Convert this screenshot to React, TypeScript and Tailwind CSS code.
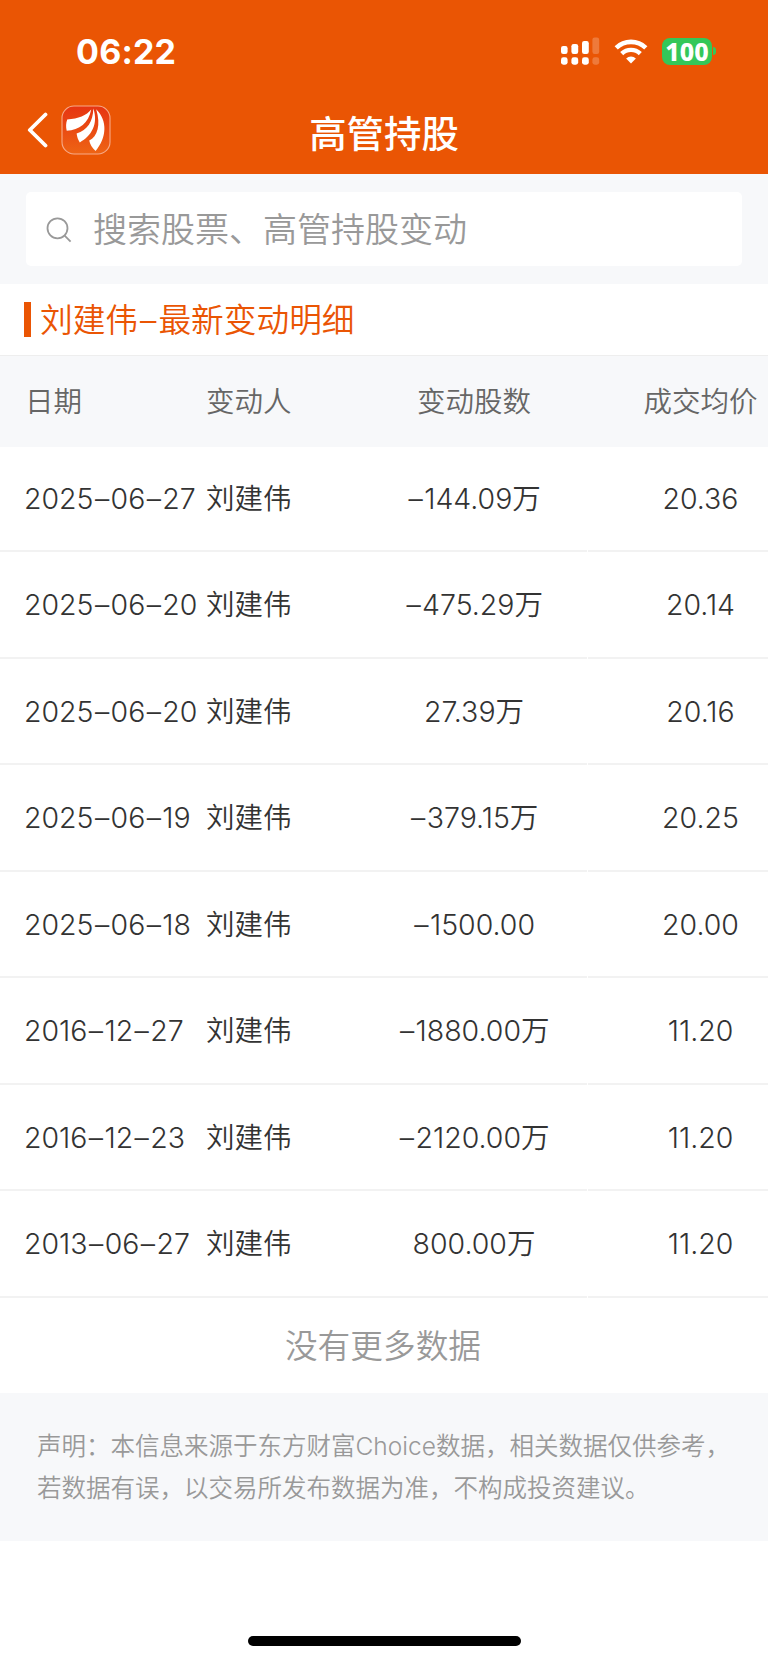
import { Fragment } from "react";

type Change = { date: string; name: string; shares: string; price: string };

const changes: Change[] = [
  { date: "2025–06–27", name: "刘建伟", shares: "–144.09万", price: "20.36" },
  { date: "2025–06–20", name: "刘建伟", shares: "–475.29万", price: "20.14" },
  { date: "2025–06–20", name: "刘建伟", shares: "27.39万", price: "20.16" },
  { date: "2025–06–19", name: "刘建伟", shares: "–379.15万", price: "20.25" },
  { date: "2025–06–18", name: "刘建伟", shares: "–1500.00", price: "20.00" },
  { date: "2016–12–27", name: "刘建伟", shares: "–1880.00万", price: "11.20" },
  { date: "2016–12–23", name: "刘建伟", shares: "–2120.00万", price: "11.20" },
  { date: "2013–06–27", name: "刘建伟", shares: "800.00万", price: "11.20" },
];

/* Gives each dash a little more air than the font does. */
function Dashed({ text }: { text: string }) {
  return (
    <span>
      {text.split("–").map((part, i) => (
        <Fragment key={i}>
          {i > 0 && <span className="mx-[1.4px]">–</span>}
          {part}
        </Fragment>
      ))}
    </span>
  );
}

function SignalIcon() {
  return (
    <svg width="39" height="28" viewBox="0 0 39 28" fill="#fff">
      <rect x="0" y="9" width="6.6" height="8" rx="2.2" />
      <rect x="10.4" y="7" width="6.8" height="10" rx="2.2" />
      <rect x="21" y="4" width="6.8" height="13" rx="2.2" />
      <rect x="0" y="20.3" width="6.6" height="7.4" rx="2.4" />
      <rect x="10.4" y="20.3" width="6.8" height="7.4" rx="2.4" />
      <rect x="21" y="20.3" width="6.8" height="7.4" rx="2.4" />
      <g opacity="0.22">
        <rect x="31.4" y="0.6" width="6.8" height="16.4" rx="2.2" />
        <rect x="31.4" y="20.3" width="6.8" height="7.4" rx="2.4" />
      </g>
    </svg>
  );
}

function WifiIcon() {
  return (
    <svg width="34" height="25" viewBox="0 0 34 25" fill="none" stroke="#fff">
      <path d="M2.2 8.9 A21.3 21.3 0 0 1 31.8 8.9" strokeWidth="4.6" />
      <path d="M7.7 14.6 A13.4 13.4 0 0 1 26.3 14.6" strokeWidth="4.4" />
      <path d="M17 24.6 L12.1 19.6 A7 7 0 0 1 21.9 19.6 Z" fill="#fff" stroke="none" />
    </svg>
  );
}

function AppLogo() {
  return (
    <svg width="50" height="50" viewBox="0 0 50 50">
      <defs>
        <linearGradient id="logo" x1="0" y1="0" x2="0" y2="1">
          <stop offset="0" stopColor="#e63412" />
          <stop offset="1" stopColor="#ee6414" />
        </linearGradient>
      </defs>
      <rect x="1" y="1" width="48" height="48" rx="12" fill="url(#logo)" stroke="#f7a988" strokeWidth="1.1" />
      <g fill="#fff">
        <path d="M30.2 4.6 C25.5 10.5 17.5 13.8 6.2 14.6 C4.9 18 4.8 22 5.7 25.8 C18.5 25 27.6 18.5 30.2 4.6 Z" />
        <path d="M32.3 3.6 C32 16.8 26.5 25.4 15.6 28.4 C16 31.6 17 34.6 18.8 37.4 C30.5 31.4 37.6 18.5 32.3 3.6 Z" />
        <path d="M35.2 4.2 C40 20 36.5 31.5 28.2 35.6 C29 39.4 31 43 34.6 46 C45.8 32.5 46.8 15.6 35.2 4.2 Z" />
      </g>
    </svg>
  );
}

function StatusBar() {
  return (
    <div className="flex h-[102px] items-center justify-between pl-[76px] pr-[52px]">
      <span className="pt-px font-['Inter'] text-[34px] font-bold leading-none tracking-[0.2px] text-white">06:22</span>
      <div className="flex items-center">
        <SignalIcon />
        <span className="ml-[14px] flex"><WifiIcon /></span>
        <div className="ml-[14px] flex h-[27px] w-[50px] items-center justify-center rounded-[8px] bg-[#34c759] pt-px font-['Noto_Sans'] text-[25px] font-extrabold leading-none text-white">
          <span>100</span>
        </div>
        <div className="ml-px h-[8px] w-[3px] rounded-r-full bg-[#34c759]" />
      </div>
    </div>
  );
}

function NavBar() {
  return (
    <div className="grid h-[71px] grid-cols-3 items-center">
      <div className="flex items-center pb-[15px] pl-[27px]">
        <svg width="22" height="36" viewBox="0 0 22 36" fill="none" stroke="#fff" strokeWidth="3.8" strokeLinecap="round" strokeLinejoin="round">
          <path d="M18.5 2.5 L2.8 18 L18.5 33.5" />
        </svg>
        <span className="ml-[12px] flex"><AppLogo /></span>
      </div>
      <h1 className="pb-[5px] text-center text-[37.4px] font-medium leading-none text-white">高管持股</h1>
    </div>
  );
}

const row = "flex w-[814px] shrink-0";

export default function App() {
  return (
    <div className="flex h-[1663px] w-[768px] flex-col overflow-hidden bg-white font-['Inter','Noto_Sans_CJK_SC',sans-serif] font-[350] text-[#333]">
      <header className="h-[173.5px] shrink-0 bg-[#ea5504]">
        <StatusBar />
        <NavBar />
      </header>

      <div className="h-[110.5px] shrink-0 bg-[#f7f8fa] px-[26px] pt-[18.5px]">
        <div className="flex h-[74px] items-center rounded-[5px] bg-white pl-[20px]">
          <svg className="mt-[2px]" width="26" height="26" viewBox="0 0 26 26" fill="none" stroke="#999" strokeWidth="1.8">
            <circle cx="11.5" cy="11.3" r="10" />
            <path d="M18.4 18.4 L24.6 24.6" />
          </svg>
          <span className="ml-[21px] pt-[2px] text-[34px] leading-none text-[#999]">搜索股票、高管持股变动</span>
        </div>
      </div>

      <div className="flex h-[72px] shrink-0 items-center border-b border-[#eee] pl-[24px]">
        <div className="h-[35px] w-[7px] bg-[#ea5504]" />
        <h2 className="ml-[9px] pt-[2px] text-[32.7px] leading-none text-[#ea5504]">
          刘建伟<span className="mx-[2px]">–</span>最新变动明细
        </h2>
      </div>

      <div className={`${row} h-[91px] items-center bg-[#f7f8fa] pt-[2px] text-[28.5px] leading-none text-[#666]`}>
        <div className="w-[206px] pl-[25px]">日期</div>
        <div className="w-[155px]">变动人</div>
        <div className="w-[226px] text-center">变动股数</div>
        <div className="w-[227px] text-center">成交均价</div>
      </div>

      {changes.map((c, i) => (
        <div key={i} className={`${row} text-[28.5px] leading-none ${i === 0 ? "h-[105px]" : "h-[106.5px]"}`}>
          <div className="flex w-[206px] items-center whitespace-nowrap border-b-2 border-[#f2f2f2] pl-[24px] pt-[2px]"><Dashed text={c.date} /></div>
          <div className="flex w-[155px] items-center border-b-2 border-[#f2f2f2] pt-[2px]">{c.name}</div>
          <div className="flex w-[226px] items-center justify-center border-b-2 border-[#f2f2f2] pt-[2px]"><Dashed text={c.shares} /></div>
          <div className="ml-px flex w-[226px] items-center justify-center border-b-2 border-[#f2f2f2] pr-px pt-[2px]">{c.price}</div>
        </div>
      ))}

      <div className="flex h-[95.5px] shrink-0 items-center justify-center pr-[2px] pt-[2px] text-[32.7px] leading-none text-[#999]">
        没有更多数据
      </div>

      <footer className="h-[148px] shrink-0 whitespace-nowrap bg-[#f7f8fa] pl-[37px] pt-[33px] text-[24.5px] leading-[41.5px] text-[#999]">
        <p>声明：本信息来源于东方财富Choice数据，相关数据仅供参考，</p>
        <p>若数据有误，以交易所发布数据为准，不构成投资建议。</p>
      </footer>

      <div className="mx-auto mb-[17px] mt-auto h-[10px] w-[273px] rounded-full bg-black" />
    </div>
  );
}
